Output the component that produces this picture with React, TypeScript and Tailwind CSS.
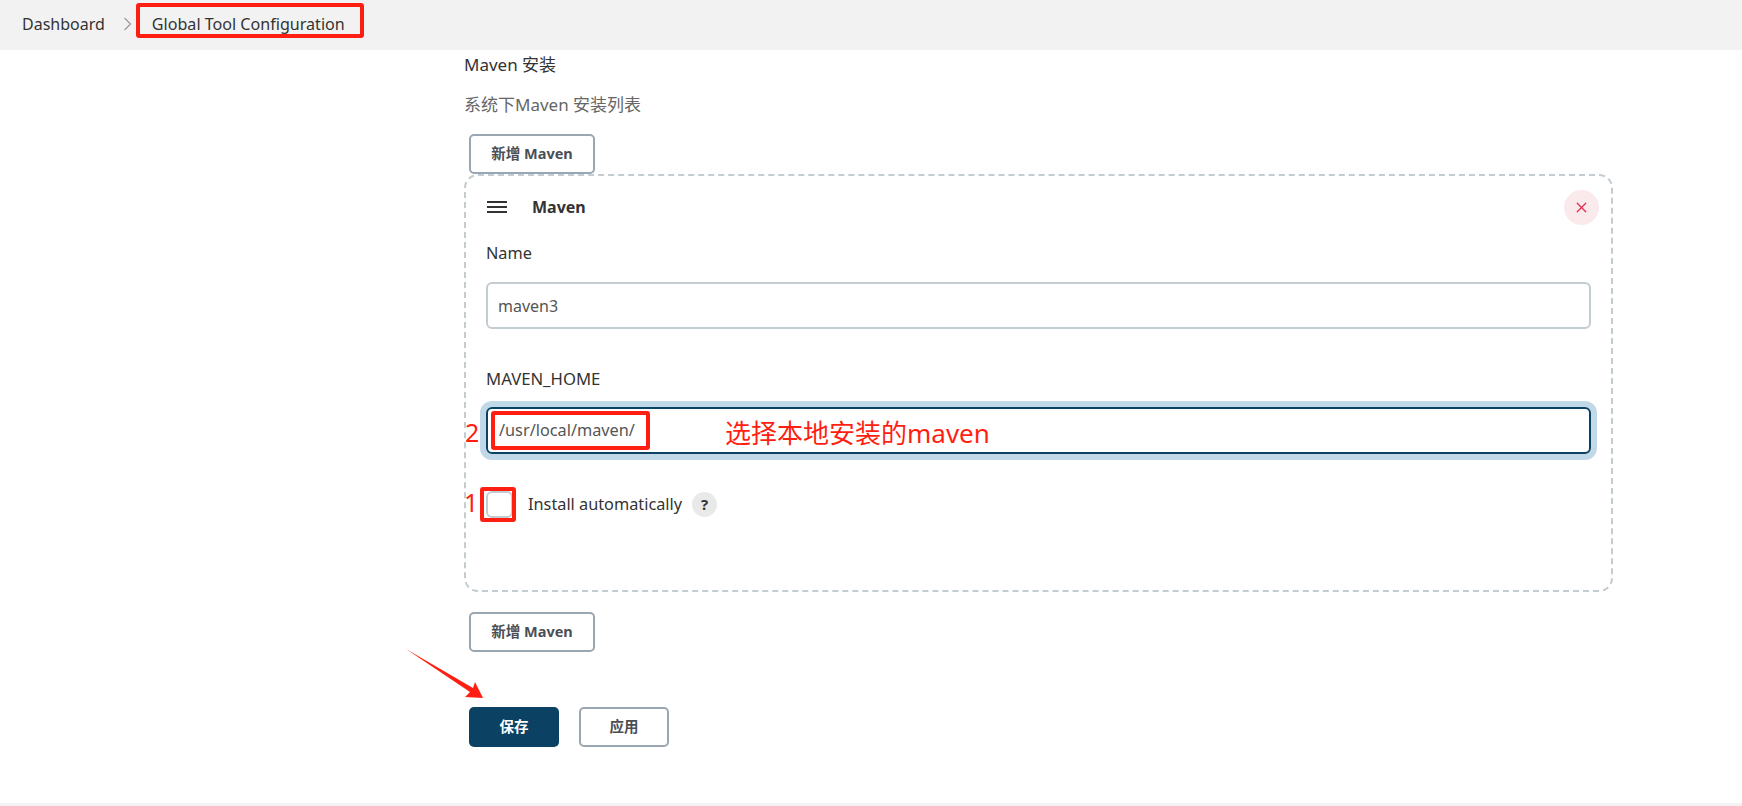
import { X } from 'lucide-react';

const font = "font-['Noto_Sans','Noto_Sans_CJK_SC',sans-serif]";

const OutlineButton = ({ label, w }: { label: string; w: string }) => (
  <button className={`${w} h-[40px] bg-white border-2 border-[#9aa7b2] rounded-[5px] text-[14.5px] font-bold text-[#4b4f55] flex items-center justify-center`}>
    {label}
  </button>
);

const App = () => {
  return (
    <div className={`${font} relative h-[806px] bg-white text-[#333] overflow-hidden`}>
      {/* Breadcrumb */}
      <div className="h-[50px] bg-[#f2f2f2] flex items-center pb-[2px] pl-[22px] text-[16px] text-[#333]">
        <span>Dashboard</span>
        <svg className="ml-[18px] w-[9px] h-[14px]" viewBox="0 0 9 14" fill="none" stroke="#999" strokeWidth="1.2">
          <path d="M1.5 1l6 6-6 6" />
        </svg>
        <span className="ml-[20px] text-[16.1px]">Global Tool Configuration</span>
      </div>

      {/* Form */}
      <div className="ml-[464px] w-[1149px]">
        <div className="pt-[4px] h-[35px] text-[17px] leading-[22px]">Maven 安装</div>
        <div className="mt-[8px] text-[17px] leading-[24px] text-[#666]">系统下Maven 安装列表</div>
        <div className="mt-[17px] pl-[5px]">
          <OutlineButton label="新增 Maven" w="w-[126px]" />
        </div>

        <div className="h-[418px] border-2 border-dashed border-[#c3ccd1] rounded-[14px] pl-[20px] pr-[20px] relative">
          <div className="flex items-center h-[34px] mt-[14px]">
            <svg className="w-[22px] h-[22px]" viewBox="0 0 22 22" fill="none" stroke="#333" strokeWidth="1.8">
              <path d="M1 6h20M1 11h20M1 16h20" />
            </svg>
            <span className="ml-[24px] text-[16px] font-bold">Maven</span>
            <div className="ml-auto mr-[-8px] w-[35px] h-[35px] rounded-full bg-[#fbeaec] flex items-center justify-center">
              <X className="w-[17px] h-[17px] text-[#e6294b]" strokeWidth={1.8} />
            </div>
          </div>

          <div className="mt-[17px] text-[16.3px] leading-[24px]">Name</div>
          <div className="mt-[17px] h-[47px] border-2 border-[#c3ccd1] rounded-[6px] flex items-center px-[10px] text-[16px] text-[#555]">
            maven3
          </div>

          <div className="mt-[38px] text-[16.7px] leading-[24px]">MAVEN_HOME</div>
          <div className="mt-[16px] h-[47px] border-2 border-[#0b4263] rounded-[6px] ring-[6px] ring-[#c0d8e7] flex items-center px-[11px] text-[16.3px] text-[#555]">
            /usr/local/maven/
          </div>

          <div className="mt-[37px] flex items-center">
            <div className="w-[27px] h-[27px] border-2 border-[#c3ccd1] rounded-[6px] bg-white" />
            <span className="ml-[15px] text-[16.3px]">Install automatically</span>
            <div className="ml-[10px] w-[25px] h-[25px] rounded-full bg-[#e9e9e9] flex items-center justify-center text-[15px] font-bold">?</div>
          </div>
        </div>

        <div className="mt-[20px] pl-[5px]">
          <OutlineButton label="新增 Maven" w="w-[126px]" />
        </div>

        <div className="mt-[55px] pl-[5px] flex gap-[20px]">
          <button className="w-[90px] h-[40px] bg-[#0b4263] rounded-[5px] text-[14.5px] font-bold text-white">保存</button>
          <OutlineButton label="应用" w="w-[90px]" />
        </div>
      </div>

      {/* Footer line */}
      <div className="absolute left-0 right-0 bottom-0 h-[3px] bg-[#f2f2f2]" />

      {/* Annotations */}
      <div className="absolute left-[136px] top-[3px] w-[228px] h-[35px] border-4 border-[#ff1f12] rounded-[3px]" />
      <div className="absolute left-[491px] top-[411px] w-[159px] h-[39px] border-4 border-[#ff1f12] rounded-[3px]" />
      <div className="absolute left-[480px] top-[487px] w-[36px] h-[35px] border-4 border-[#ff1f12] rounded-[3px]" />
      <span className="absolute left-[465px] top-[415px] text-[25px] leading-[34px] text-[#ff1f12]">2</span>
      <span className="absolute left-[464px] top-[485px] text-[25px] leading-[34px] text-[#ff1f12]">1</span>
      <span className="absolute left-[725px] top-[416px] text-[26px] leading-[34px] text-[#ff1f12]">选择本地安装的maven</span>
      <svg className="absolute left-[405px] top-[645px]" width="85" height="60" viewBox="0 0 85 60" fill="#ff1f12">
        <path d="M1 4 L68 43 L70 37 L78 53 L60 52 L65 47 Z" />
      </svg>
    </div>
  );
};

export default App;
